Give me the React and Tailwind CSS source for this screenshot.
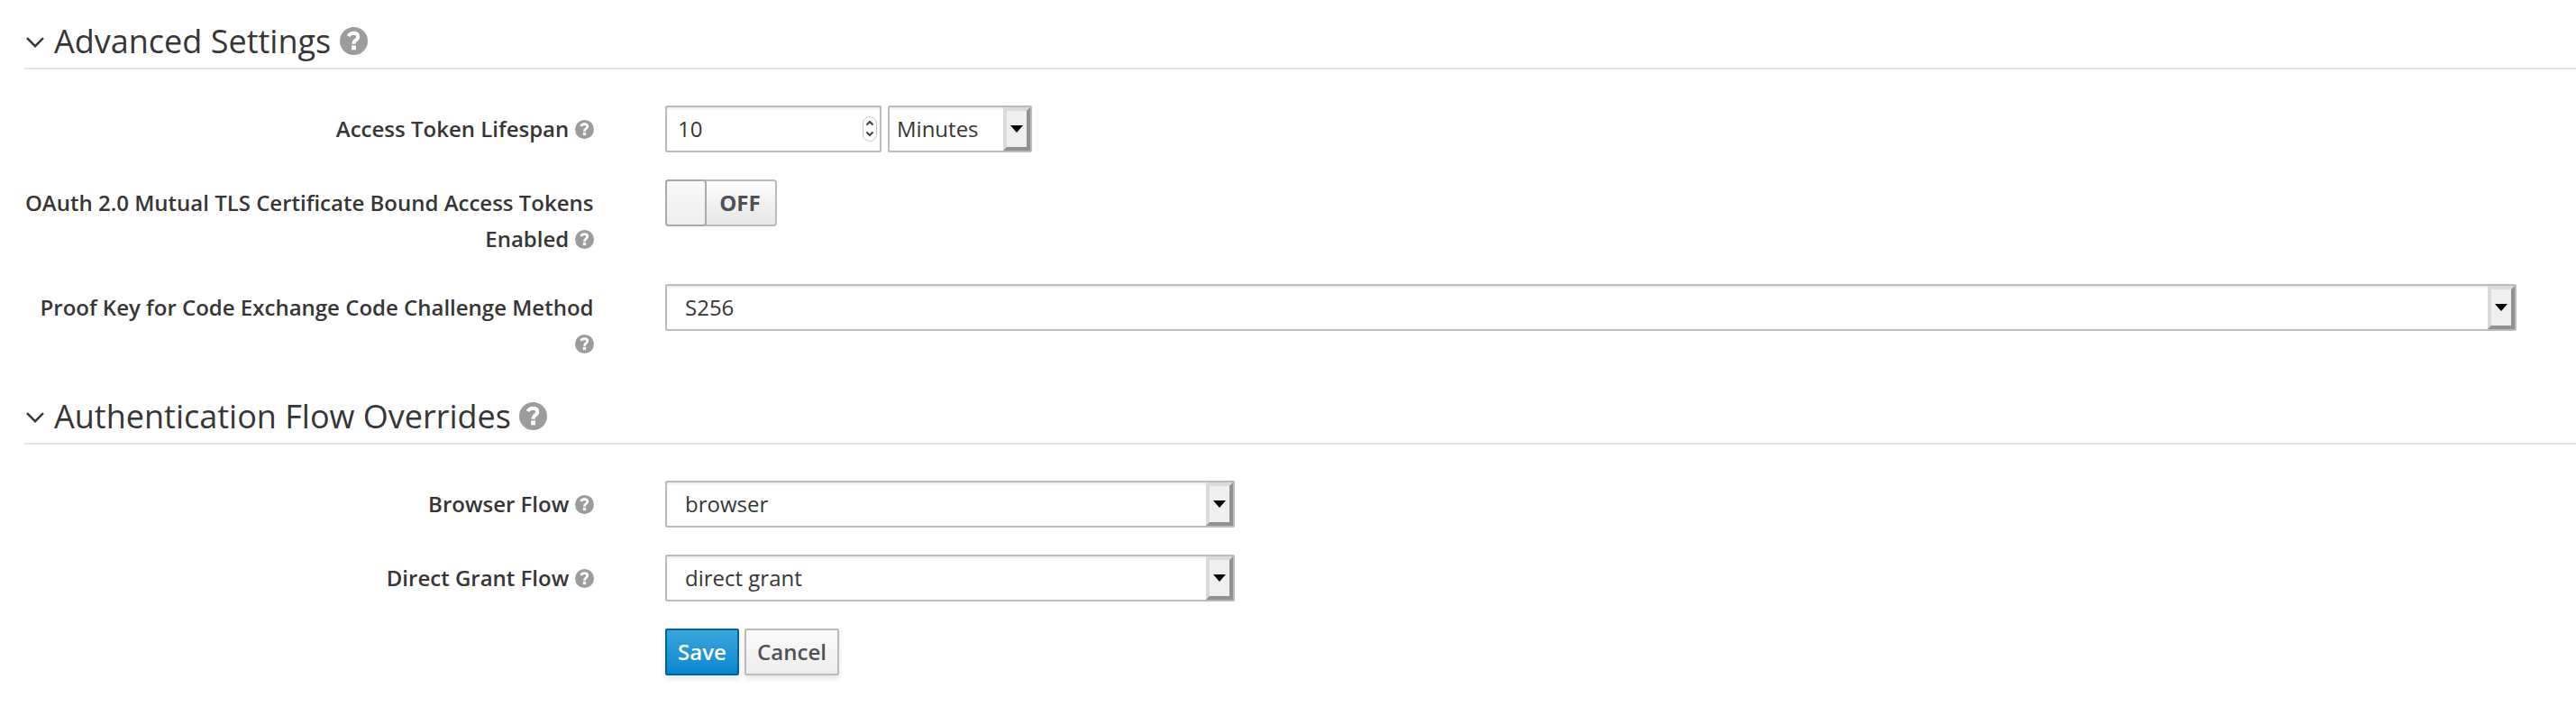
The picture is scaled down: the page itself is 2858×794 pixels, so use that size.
function HelpIcon({ className }) {
  return (
    <svg viewBox="0 0 31 31" className={className} aria-hidden="true">
      <circle cx="15.5" cy="15.5" r="15.5" fill="#9c9c9c" />
      <path d="M9.6 10.2C10.8 7.8 12.8 6.8 15.3 6.8c3 0 4.9 1.5 4.9 3.9 0 2-1 2.9-2.6 4-1.5 1-2.1 1.8-2.1 4" fill="none" stroke="#fff" strokeWidth="4" />
      <rect x="13.1" y="20.4" width="4.8" height="4.9" fill="#fff" />
    </svg>
  );
}

function Section({ title, children }) {
  return (
    <fieldset>
      <legend className="flex h-[77px] w-full items-center border-b-2 border-[#e5e5e5] pl-[2px] pt-[16px] text-[36px] leading-[40px] text-[#363636]">
        <svg viewBox="0 0 20 12" className="mt-[2px] h-[12px] w-[20px]" aria-hidden="true">
          <path d="M1 1.2 10 10.2 19 1.2" fill="none" stroke="#363636" strokeWidth="2.4" />
        </svg>
        <span className="ml-[11px] whitespace-nowrap">{title}</span>
        <HelpIcon className="ml-[9.5px] h-[31px] w-[31px] shrink-0" />
      </legend>
      <div className="flex flex-col gap-[30px] pt-[40px]">{children}</div>
    </fieldset>
  );
}

function Row({ label, children }) {
  return (
    <div className="flex items-start">
      <div className="w-[631.5px] shrink-0 pt-[6px] text-right font-semibold leading-[40px]">
        {label}{" "}
        <HelpIcon className="mb-[4px] inline-block h-[21px] w-[21px] align-middle" />
      </div>
      <div className="ml-[79.5px] flex">{children}</div>
    </div>
  );
}

const field =
  "flex h-[52px] justify-between rounded-[2px] border-2 border-[#bbb] bg-white leading-[48px] shadow-[inset_0_2px_2px_rgba(3,3,3,0.075)]";

function Select({ value, width, pad = "pl-[20px]" }) {
  return (
    <div className={`${field} ${width} ${pad}`}>
      <span>{value}</span>
      <span className="flex h-[48px] w-[30px] items-center justify-center border-4 border-b-[#919191] border-l-[#dadada] border-r-[#919191] border-t-[#dadada] bg-[#efefef]">
        <svg viewBox="0 0 14 8" className="h-[8px] w-[14px]" aria-hidden="true">
          <path d="M0 0h14L7 8z" fill="#000" />
        </svg>
      </span>
    </div>
  );
}

export default function App() {
  return (
    <main className="h-[794px] w-[2858px] overflow-hidden bg-white pl-[27px] font-['Open_Sans',sans-serif] text-[24px] text-[#363636]">
      <Section title="Advanced Settings">
        <Row label="Access Token Lifespan">
          <div className={`${field} w-[240px] items-center pl-[12px] pr-[3px]`}>
            <span>10</span>
            <svg viewBox="0 0 16 28" className="h-[28px] w-[16px] overflow-visible" aria-hidden="true">
              <rect x="0.5" y="0.5" width="15" height="27" rx="7.5" fill="#fff" stroke="#c6c6c6" />
              <path d="M4.5 9.5 8 6l3.5 3.5M4.5 17.5 8 21l3.5-3.5" fill="none" stroke="#444" strokeWidth="2" />
            </svg>
          </div>
          <div className="ml-[7px]">
            <Select value="Minutes" width="w-[160px]" pad="pl-[8px]" />
          </div>
        </Row>
        <Row label="OAuth 2.0 Mutual TLS Certificate Bound Access Tokens Enabled">
          <div className="flex h-[52px] w-[124px] rounded-[4px] border-2 border-[#bbb] bg-linear-to-b from-[#fefefe] to-[#e6e6e6]">
            <span className="-my-[2px] -ml-[2px] h-[52px] w-[46px] rounded-[4px] border-2 border-[#aaa] bg-linear-to-b from-[#fafafa] to-[#ededed]" />
            <span className="flex-1 pr-[2px] text-center font-bold leading-[48px] text-[#4d5258]">OFF</span>
          </div>
        </Row>
        <Row label="Proof Key for Code Exchange Code Challenge Method">
          <Select value="S256" width="w-[2054px]" />
        </Row>
      </Section>
      <div className="mt-[15px]">
        <Section title="Authentication Flow Overrides">
          <Row label="Browser Flow">
            <Select value="browser" width="w-[632px]" />
          </Row>
          <Row label="Direct Grant Flow">
            <Select value="direct grant" width="w-[632px]" />
          </Row>
          <div className="flex gap-[6px] pl-[711px] font-semibold leading-[48px]">
            <button className="h-[52px] w-[82px] rounded-[2px] border-2 border-[#00659c] bg-linear-to-b from-[#39a5dc] to-[#0088ce] text-white shadow-[0_4px_6px_rgba(3,3,3,0.1)]">Save</button>
            <button className="h-[52px] w-[105px] rounded-[2px] border-2 border-[#bbb] bg-linear-to-b from-[#fafafa] to-[#ededed] text-[#4d5258] shadow-[0_4px_6px_rgba(3,3,3,0.1)]">Cancel</button>
          </div>
        </Section>
      </div>
    </main>
  );
}
